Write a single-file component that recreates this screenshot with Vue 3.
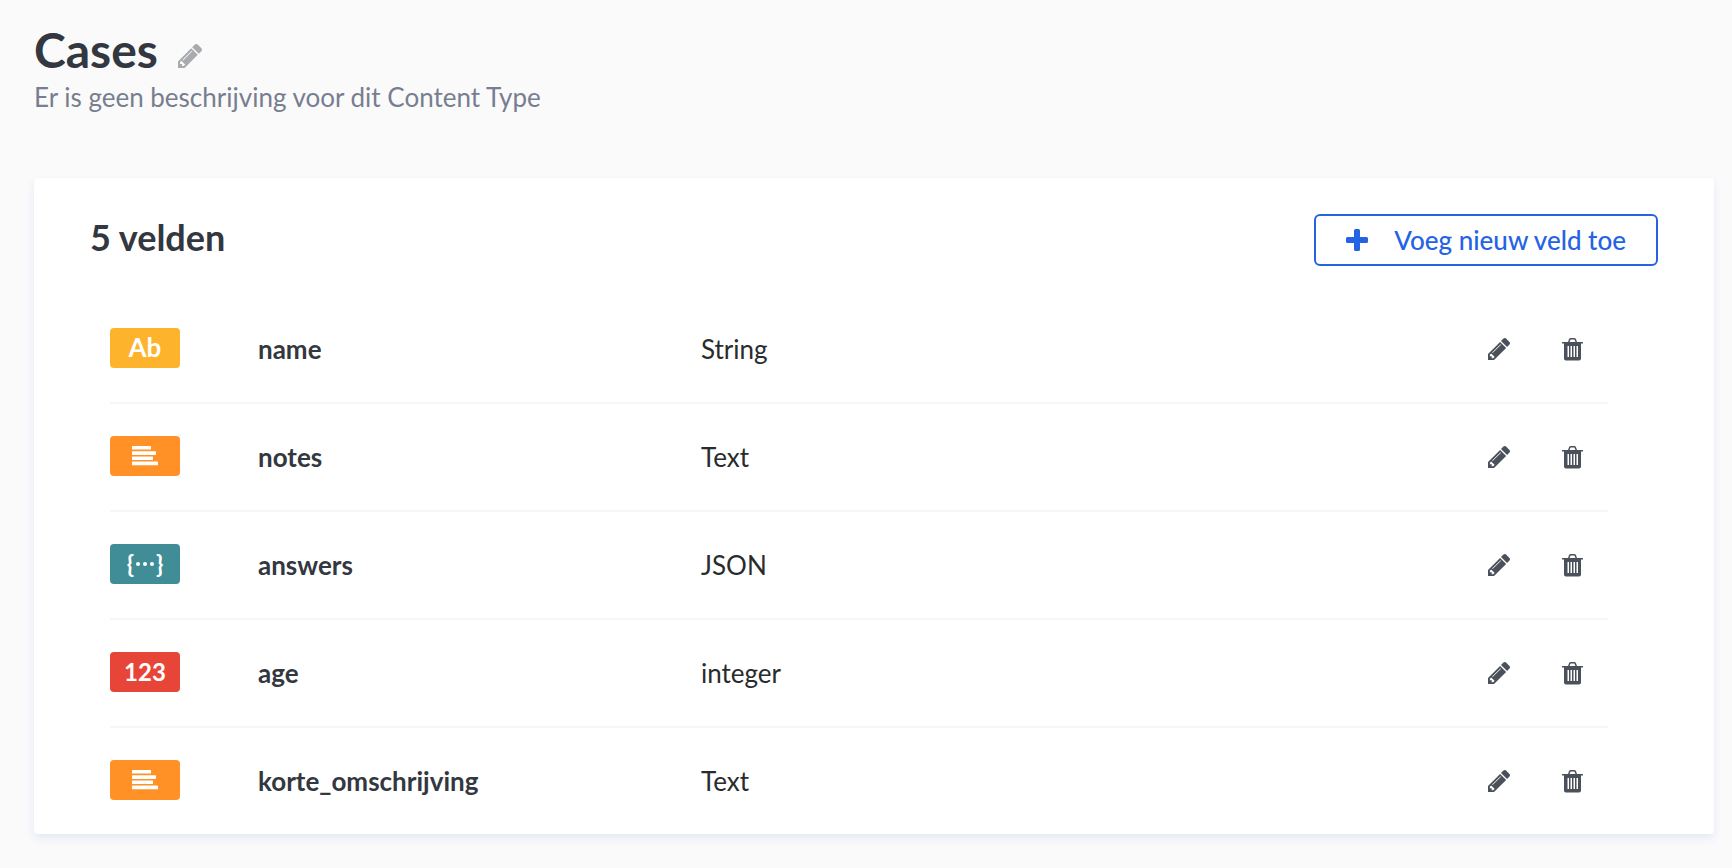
<script setup>
const fields = [
  { name: 'name', type: 'String', kind: 'string' },
  { name: 'notes', type: 'Text', kind: 'text' },
  { name: 'answers', type: 'JSON', kind: 'json' },
  { name: 'age', type: 'integer', kind: 'number' },
  { name: 'korte_omschrijving', type: 'Text', kind: 'text' },
]
const badgeText = { string: 'Ab', number: '123' }
const pencil =
  'M491 1536l91-91-235-235-91 91v107h128v128h107zM1014 608q0-22-22-22-10 0-17 7l-542 542q-7 7-7 17 0 22 22 22 10 0 17-7l542-542q7-7 7-17zM960 416l416 416-832 832h-416v-416zM1643 512q0 53-37 90l-166 166-416-416 166-165q36-38 90-38 53 0 91 38l235 234q37 39 37 91z'
</script>

<template>
  <main class="page">
    <header class="page-header">
      <div class="title-row">
        <h1>Cases</h1>
        <button class="icon-button title-edit" type="button" aria-label="Cases bewerken">
          <svg width="24" height="24" viewBox="128 149 1515 1515"><path :d="pencil" /></svg>
        </button>
      </div>
      <p>Er is geen beschrijving voor dit Content Type</p>
    </header>

    <section class="card">
      <div class="card-header">
        <h2>5 velden</h2>
        <button class="add-button" type="button">
          <svg width="22" height="22" viewBox="0 0 22 22">
            <path d="M9.500 0h3q1.500 0 1.500 1.500V8h6.500q1.500 0 1.500 1.500v3q0 1.500-1.500 1.500H14v6.500q0 1.500-1.500 1.500h-3Q8 22 8 20.500V14H1.500Q0 14 0 12.500v-3Q0 8 1.500 8H8V1.500Q8 0 9.500 0z" />
          </svg>
          <span>Voeg nieuw veld toe</span>
        </button>
      </div>

      <table>
        <colgroup>
          <col class="col-badge" />
          <col class="col-name" />
          <col />
          <col class="col-actions" />
        </colgroup>
        <tbody>
          <tr v-for="field in fields" :key="field.name">
            <td>
              <span class="badge" :class="field.kind">
                <svg v-if="field.kind === 'text'" width="26" height="20" viewBox="0 0 26 20">
                  <rect width="19" height="3.500" rx=".6" />
                  <rect y="5.200" width="24" height="3.700" rx=".6" />
                  <rect y="10.400" width="21" height="3.700" rx=".6" />
                  <rect y="15.600" width="26" height="3.700" rx=".6" />
                </svg>
                <template v-else-if="field.kind === 'json'">
                  <span>{</span>
                  <svg width="18" height="4" viewBox="0 0 18 4">
                    <circle cx="2" cy="2" r="2" />
                    <circle cx="9" cy="2" r="2" />
                    <circle cx="16" cy="2" r="2" />
                  </svg>
                  <span>}</span>
                </template>
                <template v-else>{{ badgeText[field.kind] }}</template>
              </span>
            </td>
            <th scope="row">{{ field.name }}</th>
            <td>{{ field.type }}</td>
            <td>
              <div class="actions">
                <button class="icon-button" type="button" :aria-label="field.name + ' bewerken'">
                  <svg width="22" height="22" viewBox="128 149 1515 1515"><path :d="pencil" /></svg>
                </button>
                <button class="icon-button" type="button" :aria-label="field.name + ' verwijderen'">
                  <svg width="21" height="23" viewBox="0 0 21 23">
                    <path
                      fill-rule="evenodd"
                      d="M6 4L7 1.200Q7.500 0 8.700 0h3.600q1.200 0 1.700 1.200L15 4h6v1.500h-2V20.500q0 2-2 2H4q-2 0-2-2V5.500H0V4zM7.600 4h5.800l-.8-2.200q-.1-.3-.5-.3H8.900q-.4 0-.5.3zM5.500 8v11h1.500V8zM8.500 8v11h1.500V8zM11.500 8v11h1.500V8zM14.500 8v11h1.500V8z"
                    />
                  </svg>
                </button>
              </div>
            </td>
          </tr>
        </tbody>
      </table>
    </section>
  </main>
</template>

<style>
body {
  background: #fafafb;
}
</style>

<style scoped>
.page {
  padding: 21px 18px 34px 34px;
  font-family: Lato, "Open Sans", sans-serif;
  font-size: 26px;
  line-height: 36px;
  color: #292b2c;
}
h1,
h2,
p {
  margin: 0;
}
h1,
h2,
th {
  font-weight: 700;
  color: #333740;
}
.page-header {
  margin-bottom: 63px;
}
.title-row {
  display: flex;
  align-items: center;
  gap: 20px;
}
h1 {
  font-size: 48px;
  line-height: 58px;
}
p {
  color: #787e8f;
}
svg {
  display: block;
  fill: currentColor;
}
button {
  font: inherit;
  cursor: pointer;
}
.icon-button {
  padding: 0;
  border: 0;
  background: none;
  color: #4b515a;
}
.title-edit {
  padding-top: 12px;
  color: #a9aaae;
}
.card {
  padding: 36px 56px 0;
  background: #fff;
  border-radius: 4px;
  box-shadow: 0 4px 8px #e3e9f3;
}
.card-header {
  display: flex;
  justify-content: space-between;
  align-items: flex-start;
  margin-bottom: 30px;
}
h2 {
  font-size: 36px;
  line-height: 46px;
}
.add-button {
  display: flex;
  align-items: center;
  gap: 26px;
  height: 52px;
  padding: 0 30px;
  border: 2px solid #2463e3;
  border-radius: 6px;
  background: #fff;
  color: #2463e3;
  font-weight: 500;
}
table {
  width: calc(100% - 70px);
  margin-left: 20px;
  table-layout: fixed;
  border-collapse: separate;
  border-spacing: 0;
}
.col-badge {
  width: 148px;
}
.col-name {
  width: 443px;
}
.col-actions {
  width: 120px;
}
td,
th {
  height: 106px;
  padding: 0;
  border-bottom: 2px solid #f6f6f6;
  text-align: left;
  vertical-align: middle;
}
tr:last-child > * {
  border-bottom: 0;
}
.badge {
  display: flex;
  align-items: center;
  justify-content: center;
  box-sizing: border-box;
  width: 70px;
  height: 40px;
  margin-bottom: 2px;
  border-radius: 4px;
  color: #fff;
  font-size: 24px;
  font-weight: 700;
}
.string {
  padding-bottom: 2px;
  background: #fdb32b;
  font-size: 26px;
}
.text {
  background: #ff9126;
}
.json {
  gap: 2px;
  background: #408d97;
}
.number {
  background: #e84539;
}
.actions {
  display: flex;
  align-items: center;
  gap: 52px;
}
</style>
